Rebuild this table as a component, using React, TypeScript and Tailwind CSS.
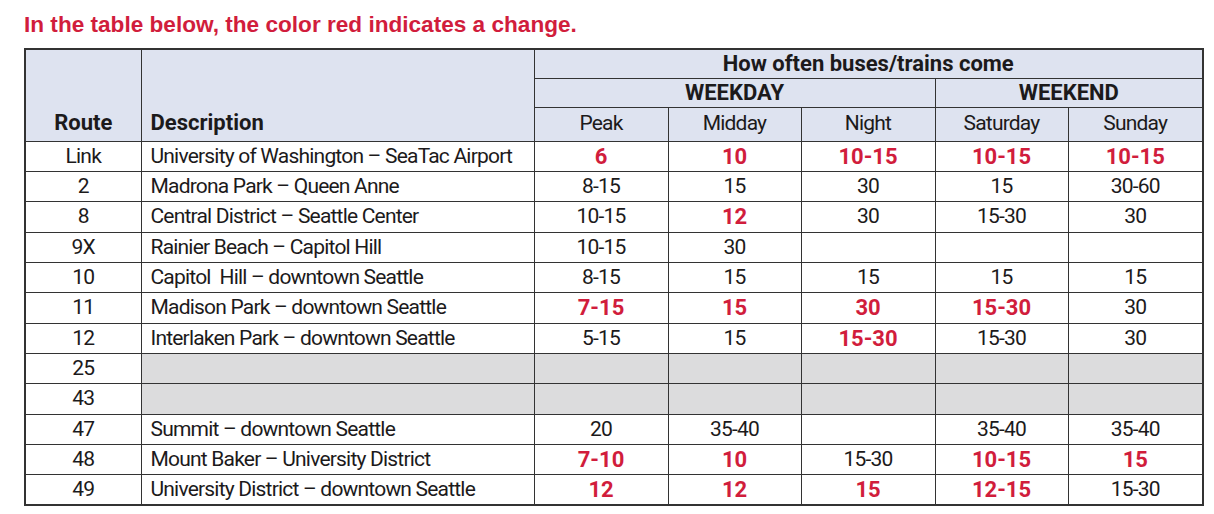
import React from "react";

type Cell = { v: string; r?: boolean };
type Row = { route: string; desc: string; gray?: boolean; cells: Cell[] };

const c = (v: string, r = false): Cell => ({ v, r });

const rows: Row[] = [
  { route: "Link", desc: "University of Washington – SeaTac Airport", cells: [c("6", true), c("10", true), c("10-15", true), c("10-15", true), c("10-15", true)] },
  { route: "2", desc: "Madrona Park – Queen Anne", cells: [c("8-15"), c("15"), c("30"), c("15"), c("30-60")] },
  { route: "8", desc: "Central District – Seattle Center", cells: [c("10-15"), c("12", true), c("30"), c("15-30"), c("30")] },
  { route: "9X", desc: "Rainier Beach – Capitol Hill", cells: [c("10-15"), c("30"), c(""), c(""), c("")] },
  { route: "10", desc: "Capitol\u00a0 Hill – downtown Seattle", cells: [c("8-15"), c("15"), c("15"), c("15"), c("15")] },
  { route: "11", desc: "Madison Park – downtown Seattle", cells: [c("7-15", true), c("15", true), c("30", true), c("15-30", true), c("30")] },
  { route: "12", desc: "Interlaken Park – downtown Seattle", cells: [c("5-15"), c("15"), c("15-30", true), c("15-30"), c("30")] },
  { route: "25", desc: "", gray: true, cells: [c(""), c(""), c(""), c(""), c("")] },
  { route: "43", desc: "", gray: true, cells: [c(""), c(""), c(""), c(""), c("")] },
  { route: "47", desc: "Summit – downtown Seattle", cells: [c("20"), c("35-40"), c(""), c("35-40"), c("35-40")] },
  { route: "48", desc: "Mount Baker – University District", cells: [c("7-10", true), c("10", true), c("15-30"), c("10-15", true), c("15", true)] },
  { route: "49", desc: "University District – downtown Seattle", cells: [c("12", true), c("12", true), c("15", true), c("12-15", true), c("15-30")] },
];

const font = { fontFamily: '"Roboto", "Liberation Sans", sans-serif' };

export default function App() {
  return (
    <div className="w-[1214px] h-[514px] bg-white overflow-hidden">
      <div className="pt-[14px] pl-[24px]">
        <div
          className="text-[22.6px] leading-none font-bold text-[#d11d3c]"
          style={{ fontFamily: '"Liberation Sans", Arial, sans-serif' }}
        >
          In the table below, the color red indicates a change.
        </div>
        <table
          className="mt-[11px] w-[1178px] table-fixed border-collapse border-2 border-[#333] text-[21px] tracking-[-0.8px] text-[#1c1a1b]"
          style={font}
        >
          <colgroup>
            <col className="w-[116px]" />
            <col className="w-[393px]" />
            <col className="w-[134px]" />
            <col className="w-[133px]" />
            <col className="w-[134px]" />
            <col className="w-[133px]" />
            <col className="w-[135px]" />
          </colgroup>
          <thead>
            <tr className="h-[29px] bg-[#dee3f0]">
              <th rowSpan={3} className="border border-[#333] align-bottom pb-[3px] text-[22px] tracking-normal font-bold text-center leading-[30px]">
                Route
              </th>
              <th rowSpan={3} className="border border-[#333] align-bottom pb-[3px] text-[22px] tracking-normal font-bold text-left pl-[9px] leading-[30px]">
                Description
              </th>
              <th colSpan={5} className="border border-[#333] text-[22px] tracking-normal font-bold text-center leading-[28px]">
                How often buses/trains come
              </th>
            </tr>
            <tr className="h-[29px] bg-[#dee3f0]">
              <th colSpan={3} className="border border-[#333] text-[22px] tracking-normal font-bold text-center leading-[28px]">
                WEEKDAY
              </th>
              <th colSpan={2} className="border border-[#333] text-[22px] tracking-normal font-bold text-center leading-[28px]">
                WEEKEND
              </th>
            </tr>
            <tr className="h-[33px] bg-[#dee3f0]">
              {["Peak", "Midday", "Night", "Saturday", "Sunday"].map((h) => (
                <th key={h} className="border border-[#333] align-bottom pb-[3px] font-normal text-center leading-[30px]">
                  {h}
                </th>
              ))}
            </tr>
          </thead>
          <tbody>
            {rows.map((row) => (
              <tr key={row.route} className="h-[30.33px]">
                <td className="border border-[#333] bg-white text-center leading-[29px] p-0">{row.route}</td>
                <td
                  className={`border border-[#333] text-left pl-[9px] leading-[29px] p-0 whitespace-pre ${
                    row.gray ? "bg-[#dcdcdd]" : "bg-white"
                  }`}
                >
                  {row.desc}
                </td>
                {row.cells.map((cell, i) => (
                  <td
                    key={i}
                    className={`border border-[#333] text-center leading-[29px] p-0 ${
                      row.gray ? "bg-[#dcdcdd]" : "bg-white"
                    } ${cell.r ? "font-bold text-[#d11d3c] text-[22px] tracking-normal" : ""}`}
                  >
                    {cell.v}
                  </td>
                ))}
              </tr>
            ))}
          </tbody>
        </table>
      </div>
    </div>
  );
}
